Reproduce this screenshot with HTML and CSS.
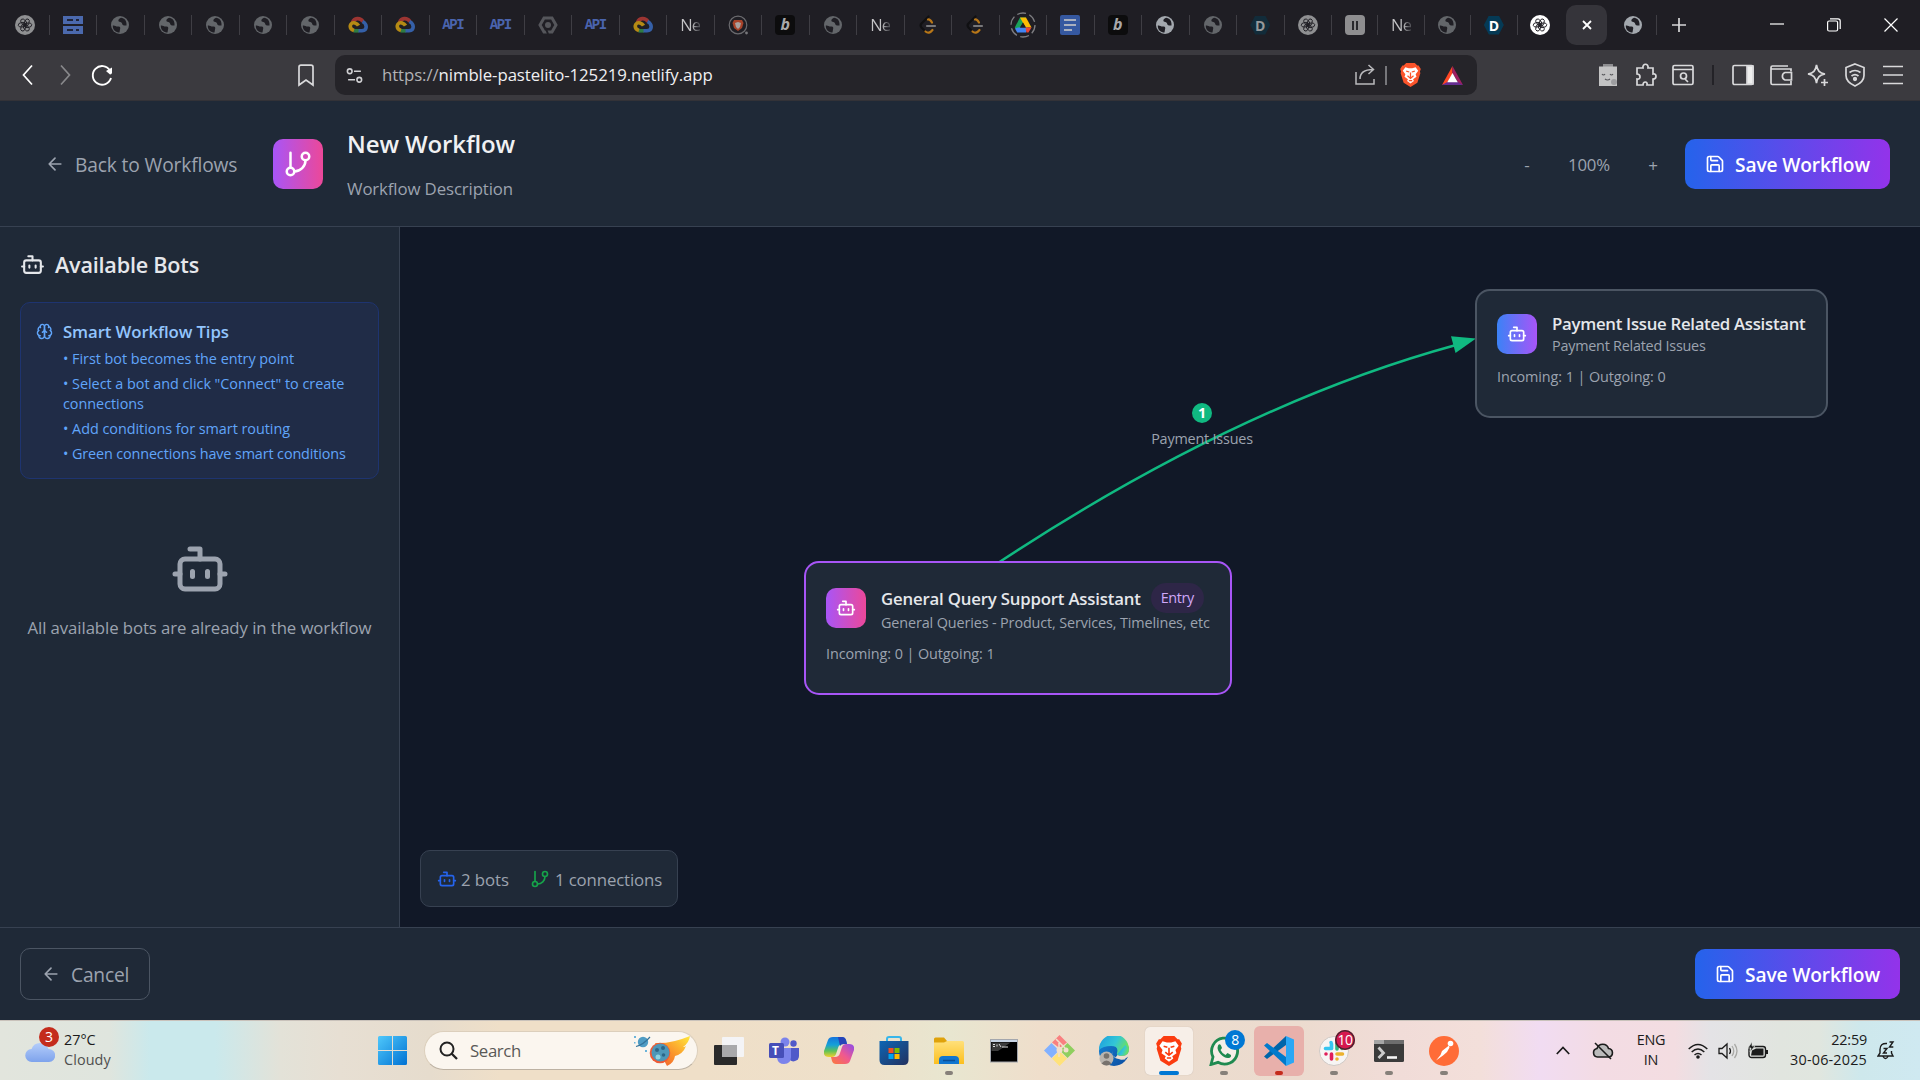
FILE: index.html
```html
<!DOCTYPE html>
<html lang="en">
<head>
<meta charset="utf-8">
<title>New Workflow</title>
<link rel="stylesheet" href="styles.css">
</head>
<body>
<svg width="0" height="0" class="defs" aria-hidden="true">
  <defs>
    <linearGradient id="gWin" x1="0" y1="0" x2="1" y2="1"><stop offset="0" stop-color="#4fc8fb"/><stop offset="1" stop-color="#0172d3"/></linearGradient>
    <linearGradient id="gCloud" x1="0" y1="0" x2="0" y2="1"><stop offset="0" stop-color="#b4cdfa"/><stop offset="1" stop-color="#7ea3ec"/></linearGradient>
    <linearGradient id="gFlame" x1="0" y1="1" x2="1" y2="0"><stop offset="0" stop-color="#f0562e"/><stop offset=".5" stop-color="#fb9a2c"/><stop offset="1" stop-color="#ffe93a"/></linearGradient>
    <linearGradient id="gCopA" x1="0" y1="0" x2="0" y2="1"><stop offset="0" stop-color="#1574dd"/><stop offset=".4" stop-color="#16a0d8"/><stop offset=".7" stop-color="#5fc257"/><stop offset="1" stop-color="#f3cf2d"/></linearGradient>
    <linearGradient id="gCopB" x1="1" y1="0" x2="0" y2="1"><stop offset="0" stop-color="#8d4bea"/><stop offset=".5" stop-color="#f0598f"/><stop offset="1" stop-color="#fb7b3a"/></linearGradient>
    <linearGradient id="gStore" x1="0" y1="0" x2="1" y2="1"><stop offset="0" stop-color="#0d66b5"/><stop offset="1" stop-color="#23315f"/></linearGradient>
    <linearGradient id="gFold" x1="0" y1="0" x2="0" y2="1"><stop offset="0" stop-color="#ffe07a"/><stop offset="1" stop-color="#fcbf1e"/></linearGradient>
    <linearGradient id="gEdge" x1="0" y1="0" x2="1" y2=".4"><stop offset="0" stop-color="#1b9be0"/><stop offset=".6" stop-color="#33c6d6"/><stop offset="1" stop-color="#6be061"/></linearGradient>
    <linearGradient id="gEdge2" x1="0" y1="0" x2="1" y2="1"><stop offset="0" stop-color="#1687d8"/><stop offset="1" stop-color="#0b4a9e"/></linearGradient>
  </defs>
  <symbol id="bot" viewBox="0 0 24 24"><g class="line"><path d="M12 8V4H8"/><rect width="16" height="12" x="4" y="8" rx="2"/><path d="M2 14h2M20 14h2M15 13v2M9 13v2"/></g></symbol>
  <symbol id="branch" viewBox="0 0 24 24"><g class="line"><path d="M6 3v12"/><circle cx="18" cy="6" r="3"/><circle cx="6" cy="18" r="3"/><path d="M18 9a9 9 0 0 1-9 9"/></g></symbol>
  <symbol id="arrow" viewBox="0 0 24 24"><g class="line"><path d="m12 19-7-7 7-7M19 12H5"/></g></symbol>
  <symbol id="save" viewBox="0 0 24 24"><g class="line"><path d="M15.2 3a2 2 0 0 1 1.4.6l3.8 3.8a2 2 0 0 1 .6 1.4V19a2 2 0 0 1-2 2H5a2 2 0 0 1-2-2V5a2 2 0 0 1 2-2z"/><path d="M17 21v-7a1 1 0 0 0-1-1H8a1 1 0 0 0-1 1v7M7 3v4a1 1 0 0 0 1 1h7"/></g></symbol>
  <symbol id="brain" viewBox="0 0 24 24"><g class="line"><path d="M12 5a3 3 0 1 0-5.997.125 4 4 0 0 0-2.526 5.770 4 4 0 0 0 .556 6.588A4 4 0 1 0 12 18Z"/><path d="M12 5a3 3 0 1 1 5.997.125 4 4 0 0 1 2.526 5.770 4 4 0 0 1-.556 6.588A4 4 0 1 1 12 18Z"/><path d="M15 13a4.500 4.500 0 0 1-3-4 4.500 4.500 0 0 1-3 4M6.003 5.125A3 3 0 0 0 6.400 6.500M3.477 10.896a4 4 0 0 1 .585-.396M6 18a4 4 0 0 1-1.967-.516M17.599 6.500a3 3 0 0 0 .399-1.375M19.938 10.500a4 4 0 0 1 .585.396M19.967 17.484A4 4 0 0 1 18 18"/></g></symbol>

  <symbol id="globe" viewBox="0 0 20 20"><circle cx="10" cy="10" r="9" fill="currentColor"/><path d="M2.800 10.500C5 10 6 12 8.500 11.500c2 0 2 1.500 1.500 3l-.5 3C6 17.500 2.500 15 2.800 10.500zM11 2.800c-2 1-3 2-2.500 3.500 1 1 3 .5 3.500 2 0 2 2 2.500 4.500 2.200C17 6 14.500 3 11 2.800z" fill="#1f1e24"/></symbol>
  <symbol id="openai" viewBox="0 0 20 20"><circle cx="10" cy="10" r="10" fill="currentColor"/><g fill="none" stroke="#1f1e24" stroke-width=".9"><ellipse cx="10.800" cy="7.300" rx="2.300" ry="4" transform="rotate(20 10 10)"/><ellipse cx="10.800" cy="7.300" rx="2.300" ry="4" transform="rotate(80 10 10)"/><ellipse cx="10.800" cy="7.300" rx="2.300" ry="4" transform="rotate(140 10 10)"/><ellipse cx="10.800" cy="7.300" rx="2.300" ry="4" transform="rotate(200 10 10)"/><ellipse cx="10.800" cy="7.300" rx="2.300" ry="4" transform="rotate(260 10 10)"/><ellipse cx="10.800" cy="7.300" rx="2.300" ry="4" transform="rotate(320 10 10)"/></g></symbol>
  <symbol id="gcloud" viewBox="0 0 20 20"><g fill="none" stroke-width="3.600"><path d="M4.500 7.500C6 2.800 12 2.200 15 6.500" stroke="#9c3532"/><path d="M14.500 6.500C19.500 9 19.500 15.500 14 15.800H10" stroke="#3560a8"/><path d="M10.500 15.800H5.500" stroke="#2e7b43"/><path d="M6 15.500C0 13.500 2 6.500 7 8c2 .6 3 1.600 3.500 2.600" stroke="#b58a14"/></g></symbol>
  <symbol id="server" viewBox="0 0 20 20"><g fill="#4b69ad"><path d="M0 1h20v8H0zM0 11h20v8H0z"/></g><path d="M4 4h6v2H4zM13 4h3v2h-3zM4 14h6v2H4zM13 14h3v2h-3z" fill="#1f2438"/></symbol>
  <symbol id="hex" viewBox="0 0 20 20"><path d="M6 3h8l4 7-4 7H6l-4-7z" fill="none" stroke="#55565b" stroke-width="3"/><circle cx="10" cy="10" r="3" fill="#55565b"/><path d="M8 14l2 5" stroke="#1f1e24" stroke-width="2"/></symbol>
  <symbol id="leet" viewBox="0 0 20 20"><g fill="none" stroke-width="2.200" stroke-linecap="round"><path d="M10.500 1.500 3.500 8.500q-1.800 2 0 4l4 4" stroke="#101012"/><path d="M10 4.500q2-.5 4 3M7.500 16.500q3.500 3 7-1.500" stroke="#b87718"/><path d="M9 11h8" stroke="#77777a"/></g></symbol>
  <symbol id="brave" viewBox="0 0 24 28"><path d="M7 0h10l3 3h1.500L24 7l-1 3 .5 2L20 23l-8 5-8-5L.5 12 1 10 0 7l2.500-4H4z" fill="currentColor"/><path d="M6 5l4 1h4l4-1 3 4-3 4 1 3-4 3 1 2-4 3-4-3 1-2-4-3 1-3-3-4z" fill="#fff"/><path d="M7 9.500l3.500 1M17 9.500l-3.500 1M12 11v6M8.500 15l3.500 3 3.500-3M10 20.500h4" stroke="currentColor" stroke-width="1.500" fill="none"/></symbol>
</svg>

<div class="screen">
  <header class="tabs">
    <div class="tab"><svg class="t-ic dim"><use href="#openai"/></svg></div>
    <div class="tab"><svg class="t-ic"><use href="#server"/></svg></div>
    <div class="tab"><svg class="t-ic gl"><use href="#globe"/></svg></div>
    <div class="tab"><svg class="t-ic gl"><use href="#globe"/></svg></div>
    <div class="tab"><svg class="t-ic gl"><use href="#globe"/></svg></div>
    <div class="tab"><svg class="t-ic gl"><use href="#globe"/></svg></div>
    <div class="tab"><svg class="t-ic gl"><use href="#globe"/></svg></div>
    <div class="tab"><svg class="t-ic"><use href="#gcloud"/></svg></div>
    <div class="tab"><svg class="t-ic"><use href="#gcloud"/></svg></div>
    <div class="tab"><span class="api">API</span></div>
    <div class="tab"><span class="api">API</span></div>
    <div class="tab"><svg class="t-ic"><use href="#hex"/></svg></div>
    <div class="tab"><span class="api">API</span></div>
    <div class="tab"><svg class="t-ic"><use href="#gcloud"/></svg></div>
    <div class="tab"><span class="ne">Ne</span></div>
    <div class="tab"><svg class="t-ic" viewBox="0 0 20 20"><circle cx="10" cy="10" r="8.800" fill="none" stroke="#6b6b6f" stroke-width="1.200"/><path d="M6 5h8l1.500 3-1.500 5-4 3-4-3-1.500-5z" fill="#a8432a"/><path d="M7 8l3-1 3 1-1 4-2 2-2-2z" fill="#a9a1a0"/><circle cx="18.500" cy="18" r="1.400" fill="#77777a"/></svg></div>
    <div class="tab"><span class="b-box">b</span></div>
    <div class="tab"><svg class="t-ic gl"><use href="#globe"/></svg></div>
    <div class="tab"><span class="ne">Ne</span></div>
    <div class="tab"><svg class="t-ic"><use href="#leet"/></svg></div>
    <div class="tab"><svg class="t-ic"><use href="#leet"/></svg></div>
    <div class="tab"><svg class="t-drive" viewBox="0 0 26 26"><circle cx="13" cy="13" r="12" fill="none" stroke="#7d7d80" stroke-width="1.300" stroke-dasharray="9 3.560"/><path d="M10 5.500h6L10.500 15 7.500 20 4.800 15.500z" fill="#19a25a"/><path d="M10 5.500h6l5.500 10h-6z" fill="#fbbc04"/><path d="M7.800 15.500h10L16 20.500H7.200L5 16.500z" fill="#4285f4"/><path d="M15.500 15.500h6l-3 5h-2z" fill="#ea4335"/><path d="M13 10.500l3 5h-6z" fill="#1f1e24"/></svg></div>
    <div class="tab"><svg class="t-ic" viewBox="0 0 20 20"><rect width="20" height="20" rx="2" fill="#3558a0"/><path d="M4 5h12M4 10h12M4 15h8" stroke="#a9b0bf" stroke-width="2"/></svg></div>
    <div class="tab"><span class="b-box">b</span></div>
    <div class="tab"><svg class="t-ic lit"><use href="#globe"/></svg></div>
    <div class="tab"><svg class="t-ic gl"><use href="#globe"/></svg></div>
    <div class="tab"><span class="d-hex off">D</span></div>
    <div class="tab"><svg class="t-ic dim"><use href="#openai"/></svg></div>
    <div class="tab sm"><span class="pause"><i></i><i></i></span></div>
    <div class="tab sm"><span class="ne">Ne</span></div>
    <div class="tab sm"><svg class="t-ic gl"><use href="#globe"/></svg></div>
    <div class="tab sm"><span class="d-hex">D</span></div>
    <div class="tab sm nodiv"><svg class="t-ic wht"><use href="#openai"/></svg></div>
    <div class="tab sm nodiv"><span class="active"><svg width="10" height="10" viewBox="0 0 10 10"><path d="M1 1l8 8M9 1 1 9" stroke="#fff" stroke-width="1.800"/></svg></span></div>
    <div class="tab sm"><svg class="t-ic lit"><use href="#globe"/></svg></div>
    <div class="tab sm nodiv"><svg width="14" height="14" viewBox="0 0 14 14"><path d="M7 0v14M0 7h14" stroke="#d6d6d8" stroke-width="1.700"/></svg></div>
    <div class="win-ctl">
      <svg width="14" height="14" viewBox="0 0 14 14"><path d="M0 6h14" stroke="#fff" stroke-width="1.200"/></svg>
      <svg width="14" height="14" viewBox="0 0 14 14"><g fill="none" stroke="#fff" stroke-width="1.200"><rect x=".6" y="3" width="10" height="10" rx="1.500"/><path d="M3 .8h8q2.200 0 2.200 2.200v8"/></g></svg>
      <svg width="14" height="14" viewBox="0 0 14 14"><path d="M.5.5l13 13M13.500.5l-13 13" stroke="#fff" stroke-width="1.200"/></svg>
    </div>
  </header>

  <div class="toolbar">
    <svg class="tb back" viewBox="0 0 24 24"><path d="M16 2.500 7.500 12l8.500 9.500" stroke="#fff"/></svg>
    <svg class="tb fwd" viewBox="0 0 24 24"><path d="M8 2.500 16.500 12 8 21.500" stroke="#88888b"/></svg>
    <svg class="tb reload" viewBox="0 0 24 24"><path d="M21 15a9.300 9.300 0 1 1-1-7.500" stroke="#fff" stroke-width="1.900"/><path d="M16 8l6-3.500v5q0 2-2 2z" fill="#fff" stroke="none"/></svg>
    <svg class="tb mark" viewBox="0 0 24 24"><path d="M5 4q0-1.800 2-1.800h10q2 0 2 1.800v18l-7-5-7 5z"/></svg>
    <div class="url">
      <svg class="tune" viewBox="0 0 16 16"><g fill="none" stroke="#d0d0d3" stroke-width="1.500"><circle cx="3.500" cy="4" r="2.200"/><path d="M7.500 4H14M2 12h6.500"/><circle cx="12.500" cy="12" r="2.200"/></g></svg>
      <span class="address">https://<b>nimble-pastelito-125219.netlify.app</b></span>
      <svg class="tb share" viewBox="0 0 24 24"><path d="M3 9v12h18v-5M7 16c0-6 4-9.500 13-9.500M15.500 2l5 4.500-5 4.500" stroke="#b9b9bc" stroke-width="1.500"/></svg>
      <i class="u-div"></i>
      <svg class="u-brave"><use href="#brave"/></svg>
      <svg class="u-bat" viewBox="0 0 24 22"><path d="M12 1 1 21l5-2 6-9z" fill="#ff4724"/><path d="M1 21h22l-5-4H8z" fill="#662d91"/><path d="M12 1l11 20-5-3-6-9z" fill="#9e1f63"/><path d="M12 8.500 17.500 18h-11z" fill="#fff"/></svg>
    </div>
    <svg class="tb ext" viewBox="0 0 24 24"><path d="M7 1h10v3H7z" fill="#8d8d90" stroke="none"/><path d="M3 3.500h18V23H3z" fill="#c3c3c4" stroke="none"/><path d="M6 11q1.500 2 3 0M14 11q1.500 2 3 0M9 16q2.500 2 5 0" stroke="#55555a" stroke-width="1.200"/><circle cx="18" cy="19" r="3" fill="#9d9da0" stroke="none"/></svg>
    <svg class="tb puzzle" viewBox="0 0 24 24"><path d="M3 5h6c-1-5 6-5 5 0h5v6c4-1 4 5 0 5v6h-6c1-4-4-4-4 0H3v-6c4 1 4-5 0-5z"/></svg>
    <svg class="tb find" viewBox="0 0 24 24"><rect x="2" y="2.500" width="20" height="19" rx="1.500"/><path d="M2 6.500h20M14 16l3 3"/><circle cx="12.500" cy="13" r="3"/></svg>
    <i class="t-div"></i>
    <svg class="tb side" viewBox="0 0 24 24"><rect x="2" y="2.500" width="20" height="19" rx="1.500"/><path d="M16 3h6v18h-6z" fill="#eee"/></svg>
    <svg class="tb wallet" viewBox="0 0 24 24"><path d="M22 8.500V6H3q-1 0-1-1.500T3.500 3H19M2 4.500V20q0 1.500 1.500 1.500H22v-3.500"/><path d="M22.500 9.500H16a4 4 0 0 0 0 7.500h6.500z"/></svg>
    <svg class="tb spark" viewBox="0 0 24 24"><path d="M10.500 2c1 6 3 8 8.500 9-5.500 1-7.500 3-8.500 9-1-6-3-8-8.500-9 5.500-1 7.500-3 8.500-9zM18.500 16v7M15 19.500h7"/></svg>
    <svg class="tb vpn" viewBox="0 0 24 24"><path d="M12 1l9 3.500v8q0 6.500-9 10.500-9-4-9-10.500v-8z"/><path d="M6.500 9.500q5.500-4 11 0M8.500 13q3.500-2.800 7 0"/><circle cx="12" cy="16" r="1.300" fill="#ddd"/></svg>
    <svg class="tb menu" viewBox="0 0 24 24"><path d="M2 3.500h20M2 12h20M2 20.500h20"/></svg>
  </div>

  <div class="app">
    <div class="app-head">
      <div class="head-left">
        <div class="back-btn"><svg class="i20"><use href="#arrow"/></svg><span class="drop">Back to Workflows</span></div>
        <div class="logo"><svg class="i30"><use href="#branch"/></svg></div>
        <div class="titles"><div class="title">New Workflow</div><div class="desc">Workflow Description</div></div>
      </div>
      <div class="head-right">
        <span class="zoom-btn">-</span><span class="zoom-val">100%</span><span class="zoom-btn plus">+</span>
        <div class="save-btn"><svg class="i20"><use href="#save"/></svg><span class="drop">Save Workflow</span></div>
      </div>
    </div>

    <div class="app-main">
      <aside class="sidebar">
        <div class="side-title"><svg class="i25"><use href="#bot"/></svg><span>Available Bots</span></div>
        <div class="tips">
          <svg class="i17"><use href="#brain"/></svg>
          <div class="tips-body">
            <div class="tips-title">Smart Workflow Tips</div>
            <ul>
              <li class="loose">• First bot becomes the entry point</li>
              <li class="loose">• Select a bot and click "Connect" to create<br>connections</li>
              <li class="loose">• Add conditions for smart routing</li>
              <li>• Green connections have smart conditions</li>
            </ul>
          </div>
        </div>
        <div class="empty"><svg class="i60"><use href="#bot"/></svg><p>All available bots are already in the workflow</p></div>
      </aside>

      <div class="canvas">
        <svg class="wire" width="1520" height="700" viewBox="400 227 1520 700">
          <path d="M991 567.500 1001 561Q1240 404 1456 345" fill="none" stroke="#10b981" stroke-width="2.500"/>
          <path d="M1476 338.500 1451 336.200 1455.500 353z" fill="#10b981"/>
        </svg>
        <div class="edge-tag"><span class="edge-num">1</span><span class="edge-txt">Payment Issues</span></div>
        <div class="node node-pay">
          <div class="node-top"><div class="node-ic blue"><svg class="i20"><use href="#bot"/></svg></div>
            <div><div class="node-name n1">Payment Issue Related Assistant</div><div class="node-sub s1">Payment Related Issues</div></div></div>
          <div class="node-io">Incoming: 1 | Outgoing: 0</div>
        </div>
        <div class="node node-gen">
          <div class="node-top"><div class="node-ic pink"><svg class="i20"><use href="#bot"/></svg></div>
            <div><div class="node-row"><span class="node-name n2">General Query Support Assistant</span><span class="entry">Entry</span></div><div class="node-sub s2">General Queries - Product, Services, Timelines, etc</div></div></div>
          <div class="node-io">Incoming: 0 | Outgoing: 1</div>
        </div>
        <div class="stats"><svg class="i20 c-blue"><use href="#bot"/></svg><span class="st1">2 bots</span><svg class="i20 c-green"><use href="#branch"/></svg><span class="st2">1 connections</span></div>
      </div>
    </div>

    <div class="app-foot">
      <div class="cancel"><svg class="i20"><use href="#arrow"/></svg><span>Cancel</span></div>
      <div class="save-btn"><svg class="i20"><use href="#save"/></svg><span>Save Workflow</span></div>
    </div>
  </div>

  <footer class="taskbar">
    <div class="weather">
      <div class="w-icon"><svg width="30" height="24" viewBox="0 0 30 24"><path d="M7 23a6.500 6.500 0 0 1-.5-13A9 9 0 0 1 23.500 10 6.500 6.500 0 0 1 24 23z" fill="url(#gCloud)"/></svg><span class="w-badge">3</span></div>
      <div class="w-text"><span>27°C</span><span class="sub">Cloudy</span></div>
    </div>
    <div class="dock">
      <svg class="start" width="29" height="29" viewBox="0 0 29 29"><path d="M0 1.500Q0 0 1.500 0H14v14H0zM15 0h12.500Q29 0 29 1.500V14H15zM0 15h14v14H1.500Q0 29 0 27.500zM15 15h14v12.500q0 1.500-1.500 1.500H15z" fill="url(#gWin)"/></svg>
      <div class="search">
        <svg width="19" height="19" viewBox="0 0 19 19"><circle cx="8" cy="8" r="6.500" fill="none" stroke="#222" stroke-width="2"/><path d="M12.500 12.500 18 18" stroke="#222" stroke-width="2.300"/></svg>
        <span>Search</span>
        <svg class="comet" width="58" height="36" viewBox="0 0 58 36"><circle cx="10" cy="9" r="5.200" fill="#4f9cc4"/><path d="M3 13.500Q10 12 17 4" stroke="#35749b" stroke-width="1.200" fill="none"/><path d="M1 3h2v2H1zM1 9h1.500v1.500H1zM12 17h2v2h-2z" fill="#6cb4da"/><path d="M22 10Q38 11 57 3q-1 7-7 11 2 0 3-1-3 8-11 10-1 7-8 10z" fill="url(#gFlame)"/><circle cx="27" cy="20" r="10.300" fill="#ee5a36"/><circle cx="27.500" cy="19.500" r="9" fill="#4e97b8"/><circle cx="24" cy="17" r="2" fill="#2d6688"/><circle cx="30" cy="15" r="2" fill="#2d6688"/><circle cx="25" cy="24" r="2.500" fill="#8fd3e2"/><circle cx="30.500" cy="22" r="1.800" fill="#2d6688"/></svg>
      </div>
      <div class="cell"><svg width="30" height="30" viewBox="0 0 30 30"><rect x="0" y="9" width="23" height="20" rx="1" fill="#2a2a2a"/><rect x="8" y="1" width="22" height="20" rx="1" fill="#f4f4f6"/><path d="M8 9h15v12H8z" fill="#a9a9ab"/></svg></div>
      <div class="cell"><svg width="30" height="30" viewBox="0 0 30 30"><circle cx="16" cy="6" r="4.500" fill="#7b83eb"/><circle cx="24.500" cy="7.500" r="3.200" fill="#5059c9"/><path d="M20 12h10v8a5.500 5.500 0 0 1-10 3z" fill="#5059c9"/><path d="M8 12h14v9q0 7-7 7-6 0-7-6z" fill="#7b83eb"/><rect x="0" y="7" width="15" height="15" rx="1.500" fill="#464eb8"/></svg><span class="teams-t">T</span></div>
      <div class="cell"><svg width="30" height="30" viewBox="0 0 30 30"><path d="M9 1h9q3 0 4 3l1 4h-4q-4 0-5 4l-2 6q-1 3-4 3H5q-6 0-5-6L4 4q1-3 5-3z" fill="url(#gCopA)"/><path d="M14 1h4q3 0 4 3l1 4h-3q-3 0-4 2z" fill="#2744b8"/><path d="M21 28h-9q-3 0-4-3l-1-4h4q4 0 5-4l2-6q1-3 4-3h3q6 0 5 6l-4 11q-1 3-5 3z" fill="url(#gCopB)"/></svg></div>
      <div class="cell"><svg width="30" height="30" viewBox="0 0 30 30"><path d="M8 7V3q0-2 2-2h10q2 0 2 2v4" fill="none" stroke="#38b6ea" stroke-width="2"/><path d="M.5 5h29v19q0 5-5 5h-19q-5 0-5-5z" fill="url(#gStore)"/><path d="M9.500 12h5v5h-5z" fill="#f25022"/><path d="M15.500 12h5v5h-5z" fill="#7fba00"/><path d="M9.500 18h5v5h-5z" fill="#00a4ef"/><path d="M15.500 18h5v5h-5z" fill="#ffb900"/></svg></div>
      <div class="cell run"><svg width="30" height="30" viewBox="0 0 30 30"><path d="M0 3q0-1.500 1.500-1.500H10l3 3.500v3H0z" fill="#dfa20b"/><path d="M0 6.500h10l3-1.500h15.500q1.500 0 1.500 1.500V28H0z" fill="url(#gFold)"/><path d="M5 28v-4q0-4 4-4h12q4 0 4 4v4z" fill="#1176cf"/><path d="M9 24.500h12" stroke="#0b4f97" stroke-width="1.500"/></svg></div>
      <div class="cell"><svg width="28" height="24" viewBox="0 0 28 24"><rect x=".5" y=".5" width="27" height="22.500" fill="#000" stroke="#a4a7ad"/><path d="M1 1h26v2H1z" fill="#c7d3e3"/><path d="M1.500 3.500h19L8 12H1.500z" fill="#3a3a3a"/><path d="M3 5.500h2M3 7.500h2M7 5.500v2M9 5l2 3M12 8h6" stroke="#ddd"/></svg></div>
      <div class="cell"><svg width="31" height="31" viewBox="0 0 31 31"><path d="M15.500 0 23 7.500 15.500 13 8 7.500z" fill="#f98080"/><path d="M7.500 8 15 15.500 7.500 23 0 15.500z" fill="#82b1ff"/><path d="M23.500 8 31 15.500 23.500 23 16 15.500z" fill="#8fcf5f"/><path d="M15.500 16.500 23 23.500 15.500 31 8 23.500z" fill="#ffe27a"/><path d="M12 4l9 9M15 8v14" stroke="#f1dfcc" stroke-width="1.500"/><circle cx="15.500" cy="15" r="3" fill="#f1dfcc"/><circle cx="22" cy="15" r="2.500" fill="#f1dfcc"/></svg></div>
      <div class="cell"><svg width="30" height="30" viewBox="0 0 30 30"><circle cx="15" cy="15" r="15" fill="url(#gEdge2)"/><path d="M0 14A15 15 0 0 1 30 13q0 7-7 7-6 0-5-3 2-7-6-7-8 0-12 4z" fill="url(#gEdge)"/><path d="M13 15q0 9 14 8-3 1-7 0-7-1-7-8z" fill="#f0e0d0"/><path d="M30 13q0 7-7 7-3 0-4.500-1l-2 2.500Q24 26 30 20z" fill="#efdecd"/><path d="M29.900 13q-.5 6.500-7 6.500-3 0-4.500-1.500l8-9z" fill="url(#gEdge)"/><circle cx="7.500" cy="22.500" r="7" fill="#b9b4ae"/><circle cx="7.500" cy="20" r="2.800" fill="#77726d"/><path d="M2.500 27.500q5-6 10 0-5 4-10 0z" fill="#77726d"/></svg></div>
      <div class="cell run active-app"><svg class="brave-ic"><use href="#brave"/></svg></div>
      <div class="cell run"><svg width="30" height="30" viewBox="0 0 30 30"><path d="M2 28.500 4 21A13 13 0 1 1 9 26.300z" fill="#f6eee7" stroke="#1f8a50" stroke-width="2.800"/><path d="M9 9.500q1.500-2.500 3 0l1 2.500-1.500 2q2 4 5 5l2-2 3.500 2q.5 2.500-2.500 3-4 .5-8-4T9 9.500z" fill="#1f8a50"/></svg><span class="n-badge wa">8</span></div>
      <div class="cell run attention"><svg width="30" height="30" viewBox="0 0 30 30"><path d="M22 0v9L3 23 0 20.500z" fill="#0065a9"/><path d="M22 30v-9L3 7 0 9.500z" fill="#007acc"/><path d="M22 0l8 3.500v23L22 30z" fill="#2ba7f5"/></svg></div>
      <div class="cell run"><svg width="30" height="30" viewBox="0 0 30 30"><circle cx="15" cy="15" r="14.500" fill="#f7f5f4" stroke="#cfc9c5"/><g stroke-width="3.600" stroke-linecap="round"><path d="M12 6.500v0M6.500 12.500h6" stroke="#36c5f0"/><path d="M12.500 8v4" stroke="#36c5f0"/><path d="M18 7v6M23 12.500v0" stroke="#2eb67d"/><path d="M18 18h5.500M18 23v0" stroke="#ecb22e"/><path d="M12.500 18v5M7 18v0" stroke="#e01e5a"/></g></svg><span class="n-badge sl">10</span></div>
      <div class="cell run"><svg width="30" height="22" viewBox="0 0 30 22"><rect width="30" height="22" rx="1.500" fill="#3b3b3b"/><path d="M0 0h30v4H0z" fill="#6d6d6d"/><path d="M0 0h10v4H0z" fill="#a5a5a5"/><path d="M4.500 7.500 9.500 13l-5 5" fill="none" stroke="#ccc" stroke-width="2.800"/><path d="M13 17.500h10" stroke="#f5f5f5" stroke-width="2.600"/></svg></div>
      <div class="cell run"><svg width="30" height="30" viewBox="0 0 30 30"><circle cx="15" cy="15" r="15" fill="#ff6c37"/><circle cx="21.500" cy="7.500" r="2.800" fill="#fff"/><path d="M20 9.500 13 15l-1.500 4L7 24.500l7-5 4-3.500 2.500-4.500z" fill="#fff"/></svg></div>
    </div>
    <div class="tray">
      <svg width="14" height="9" viewBox="0 0 14 9"><path d="M.8 8 7 1.500 13.200 8" fill="none" stroke="#1b1b1b" stroke-width="1.700"/></svg>
      <svg class="od" width="22" height="18" viewBox="0 0 22 18"><path d="M5.500 15a4.300 4.300 0 0 1-.5-8.500 6 6 0 0 1 11.500 0A4.300 4.300 0 0 1 17 15z" fill="#bbb" stroke="#1b1b1b" stroke-width="1.600"/><path d="M3 1l16 16" stroke="#1b1b1b" stroke-width="1.600"/></svg>
      <div class="lang"><span>ENG</span><span>IN</span></div>
      <svg class="wifi" width="20" height="16" viewBox="0 0 20 16"><g fill="none" stroke="#1b1b1b" stroke-width="1.500"><path d="M.7 6q9.300-9 18.600 0M3.700 9q6.300-6 12.600 0M6.500 12q3.500-3 7 0"/></g><circle cx="10" cy="14" r="1.800" fill="#1b1b1b"/></svg>
      <svg class="snd" width="20" height="18" viewBox="0 0 20 18"><g fill="none" stroke="#1b1b1b" stroke-width="1.300"><path d="M1 6.500h3L9 2v14l-5-4.500H1zM11.500 6q2 3 0 6"/><path d="M14 4q3.500 5 0 10M16.500 2q5 7 0 14" stroke="#a9a9a6"/></g></svg>
      <svg class="batt" width="21" height="17" viewBox="0 0 21 17"><rect x="1" y="4.500" width="16.500" height="11" rx="2.500" fill="none" stroke="#1b1b1b" stroke-width="1.400"/><path d="M4 8.500l4-2h7.500v7H3z" fill="#1b1b1b"/><path d="M19 8v4" stroke="#1b1b1b" stroke-width="2"/><path d="M4 0 0 6h3l-1 4 5-6H4z" fill="#1b1b1b" stroke="#dfe4df" stroke-width=".6"/></svg>
      <div class="clock"><span>22:59</span><span class="date">30-06-2025</span></div>
      <svg class="bell" width="18" height="19" viewBox="0 0 18 19"><g fill="none" stroke="#1b1b1b" stroke-width="1.400"><path d="M10 2.500Q3 2 3 8.500v3.500l-2 3h15l-1.500-3V10M6 15.500q2.500 4 5 0M6.500 7.500h3.500l-3.500 4.500h3.500M12.500 1h3.500l-3.500 5h3.800"/></g></svg>
    </div>
  </footer>
</div>
</body>
</html>
```
FILE: styles.css
```css
* { box-sizing: border-box; }
body { margin: 0; font-family: "Open Sans", "Noto Sans", sans-serif; background: #111827; overflow: hidden; }
.defs { position: absolute; }
svg { display: block; flex: none; }
.line { fill: none; stroke: currentColor; stroke-width: 2; stroke-linecap: round; stroke-linejoin: round; }
.screen { width: 1920px; height: 1080px; display: flex; flex-direction: column; white-space: nowrap; }

/* tab strip */
.tabs { height: 50px; flex: none; background: #1f1e24; display: flex; align-items: center; padding-left: 2px; }
.tab { width: 47.5px; height: 20px; flex: none; display: flex; align-items: center; justify-content: center; border-right: 1px solid #3f3e44; }
.tab.sm { width: 46.4px; }
.tab.nodiv { border-color: transparent; }
.t-ic { width: 20px; height: 20px; }
.t-drive { width: 26px; height: 26px; }
.dim { color: #8f9092; }
.gl { color: #63666a; }
.lit { color: #a3a8ae; }
.wht { color: #fff; }
.api { font: 700 14px/20px "Liberation Mono", monospace; letter-spacing: -1.4px; color: #4a64ad; }
.ne { font-size: 16.5px; line-height: 20px; letter-spacing: -.8px; padding-left: 0; color: transparent; background: linear-gradient(90deg, #c4c4c6 0 60%, #55555a 90%); background-clip: text; -webkit-background-clip: text; }
.b-box { width: 20px; height: 20px; border-radius: 4px; background: #0c0c0d; color: #a8a8aa; font: italic 700 16px/19px "Open Sans", sans-serif; text-align: center; }
.d-hex { width: 20px; height: 19px; background: #053a55; color: #fff; font-weight: 700; font-size: 14px; line-height: 19px; text-align: center; clip-path: polygon(25% 0, 75% 0, 100% 50%, 75% 100%, 25% 100%, 0 50%); }
.d-hex.off { background: #122c3a; color: #96999b; }
.pause { width: 20px; height: 20px; border-radius: 4px; background: #8e8e90; display: flex; gap: 2px; align-items: center; justify-content: center; }
.pause i { width: 2px; height: 9px; background: #2a2a2e; }
.active { width: 41px; height: 40px; flex: none; border-radius: 10px; background: #35343a; display: flex; align-items: center; justify-content: center; }
.win-ctl { margin-left: auto; padding-right: 22px; display: flex; gap: 43px; }

/* navigation toolbar */
.toolbar { height: 51px; flex: none; background: #3b3a3f; border-bottom: 1px solid #333237; display: flex; align-items: center; padding-left: 16px; }
.tb { width: 24px; height: 24px; fill: none; stroke: #d9d9db; stroke-width: 1.7; }
.fwd { margin-left: 13px; }
.reload { margin-left: 13px; }
.mark { margin-left: 180px; }
.url { width: 1142px; height: 40px; margin-left: 17px; background: #252429; border-radius: 10px; display: flex; align-items: center; padding-left: 11px; }
.tune { width: 17px; height: 17px; }
.address { margin-left: 19px; font-size: 16.8px; letter-spacing: -.08px; padding-bottom: 1px; color: #b3b3b6; width: 971px; }
.address b { font-weight: 400; color: #f0f0f2; }
.u-div { width: 1.5px; height: 19px; background: #77777b; margin-left: 8px; }
.u-brave { width: 21px; height: 24px; margin-left: 13px; color: #fb542b; }
.u-bat { width: 23px; height: 21px; margin-left: 20px; }
.ext { margin-left: 119px; }
.puzzle { margin-left: 14px; }
.find { margin-left: 13px; }
.t-div { width: 2px; height: 20px; background: #232227; margin-left: 17px; }
.side { margin-left: 17px; }
.wallet { margin-left: 14px; }
.spark, .vpn { margin-left: 13px; }
.menu { margin-left: 14px; }

/* application */
.app { height: 919px; flex: none; display: flex; flex-direction: column; background: #1f2937; color: #9ca3af; }
.i17 { width: 17px; height: 17px; }
.i20 { width: 20px; height: 20px; }
.i25 { width: 25px; height: 25px; }
.i30 { width: 30px; height: 30px; }
.i60 { width: 60px; height: 60px; }
.drop { padding-top: 2px; }
.app-head { height: 126px; flex: none; border-bottom: 1px solid #374151; padding: 0 30px; display: flex; align-items: center; justify-content: space-between; }
.head-left, .head-right { display: flex; align-items: center; }
.back-btn { display: flex; align-items: center; gap: 10px; padding-left: 15px; width: 243px; font-size: 19.2px; letter-spacing: -.14px; }
.logo { width: 50px; height: 50px; border-radius: 10px; background: linear-gradient(90deg, #a855f7, #ec4899); color: #fff; display: flex; align-items: center; justify-content: center; }
.titles { padding: 5px 0 0 24px; }
.title { font-size: 24px; line-height: 45px; font-weight: 600; letter-spacing: -.12px; color: #f0f1f3; }
.desc { font-size: 16.8px; line-height: 45px; letter-spacing: -.11px; }
.zoom-btn { width: 48px; text-align: center; font-size: 17px; padding-top: 2px; }
.plus { padding-top: 4px; }
.zoom-val { width: 78px; padding: 2px 2px 0 0; text-align: center; font-size: 16.8px; letter-spacing: -.2px; }
.save-btn { width: 205px; height: 50px; border-radius: 10px; background: linear-gradient(90deg, #2563eb, #9333ea); color: #fff; font-size: 19.2px; font-weight: 600; letter-spacing: -.141px; display: flex; align-items: center; gap: 10px; padding-left: 20px; }
.head-right .save-btn { margin-left: 8px; }

.app-main { height: 700px; flex: none; display: flex; }
.sidebar { width: 400px; flex: none; border-right: 1px solid #374151; padding: 20px; }
.side-title { display: flex; align-items: center; gap: 10px; height: 35px; font-size: 21.6px; font-weight: 600; letter-spacing: -.21px; color: #e5e7eb; }
.tips { margin-top: 20px; height: 177px; border: 1px solid #1e3470; border-radius: 10px; background: #202c47; display: flex; gap: 10px; padding: 16px 15px 0; color: #60a5fa; }
.tips .i17 { margin-top: 4px; }
.tips-title { font-size: 16.8px; line-height: 25px; font-weight: 600; letter-spacing: -.115px; color: #93c5fd; }
.tips ul { list-style: none; margin: 5px 0 0; padding: 0; display: flex; flex-direction: column; gap: 5px; font-size: 14.4px; line-height: 20px; letter-spacing: -.125px; }
.loose { letter-spacing: -.03px; }
.empty { display: flex; flex-direction: column; align-items: center; padding-top: 60px; }
.empty p { margin: 16px 0 0; font-size: 16.8px; line-height: 25px; letter-spacing: -.09px; }

.canvas { flex: 1; position: relative; background: #111827; }
.wire { position: absolute; left: 0; top: 0; }
.edge-tag { position: absolute; left: 742px; top: 175.5px; width: 120px; display: flex; flex-direction: column; align-items: center; }
.edge-num { width: 20px; height: 20px; border-radius: 50%; background: #10b981; color: #fff; font-size: 14.4px; line-height: 20px; font-weight: 700; text-align: center; }
.edge-txt { margin-top: 6px; font-size: 14.4px; line-height: 20px; letter-spacing: -.2px; }
.node { position: absolute; border: 2px solid #4b5563; border-radius: 15px; background: #1f2937; padding: 0 20px; }
.node-pay { left: 1075px; top: 62px; width: 353px; height: 129px; padding-top: 20px; }
.node-gen { left: 404px; top: 334px; width: 428px; height: 134px; padding-top: 20px; border-color: #a855f7; }
.node-top { display: flex; align-items: center; gap: 15px; }
.node-pay .node-top { height: 46px; }
.node-gen .node-top { height: 50px; }
.node-ic { width: 40px; height: 40px; flex: none; border-radius: 10px; color: #fff; display: flex; align-items: center; justify-content: center; }
.blue { background: linear-gradient(90deg, #3b82f6, #a855f7); }
.pink { background: linear-gradient(90deg, #a855f7, #ec4899); }
.node-row { display: flex; align-items: flex-start; gap: 10px; }
.node-name { font-size: 16.8px; line-height: 25px; font-weight: 600; color: #e5e7eb; }
.node-pay .node-name { margin-top: -1px; line-height: 24px; }
.node-row .node-name { padding-top: 3px; }
.n1 { letter-spacing: -.29px; }
.n2 { letter-spacing: -.188px; }
.node-sub { font-size: 14.4px; line-height: 20px; }
.s1 { letter-spacing: -.237px; margin-bottom: -1px; }
.s2 { letter-spacing: -.126px; }
.entry { width: 53px; height: 30px; border-radius: 15px; background: #2e2647; color: #d0a8f8; font-size: 14.4px; line-height: 29px; letter-spacing: -.4px; text-align: center; }
.node-io { margin-top: 10px; font-size: 14.4px; line-height: 20px; letter-spacing: -.087px; }
.node-gen .node-io { margin-top: 11px; }
.stats { position: absolute; left: 20px; top: 623px; width: 258px; height: 57px; border: 1px solid #374151; border-radius: 10px; background: #1f2937; display: flex; align-items: center; padding-left: 16px; font-size: 16.8px; }
.stats span { padding-top: 1px; }
.c-blue { color: #2563eb; }
.c-green { color: #16a34a; }
.stats .st1 { width: 73px; padding-left: 4px; letter-spacing: -.05px; }
.stats .st2 { padding-left: 5px; letter-spacing: -.13px; }

.app-foot { height: 93px; flex: none; border-top: 1px solid #374151; padding: 0 20px; display: flex; align-items: center; justify-content: space-between; }
.cancel { width: 130px; height: 52px; border: 1px solid #4b5563; border-radius: 10px; display: flex; align-items: center; gap: 10px; padding-left: 20px; font-size: 19.2px; letter-spacing: -.2px; }

/* taskbar */
.taskbar { height: 60px; flex: none; display: flex; align-items: center; border-top: 1px solid #c9c2bb; color: #1b1b1b; font-size: 14.4px; line-height: 20px;
  background: linear-gradient(90deg, #e2e5dd 0, #dfe5de 110px, #cae9ec 150px, #cae9ec 215px, #e3e2d8 280px, #e7dfd3 340px, #e6dccd 430px, #efdfc8 500px, #efdfc8 700px, #eee0ca 860px, #e8e6d0 950px, #efdecb 1040px, #ebdccd 1150px, #ecdbcf 1300px, #f1dcd8 1400px, #f3dfda 1480px, #f1dcf2 1540px, #f3dce4 1600px, #f3dde1 1675px, #e4e3e6 1710px, #e1e5df 1780px, #e0e6df 1820px, #cee8ec 1860px, #cfe9f1 1920px); }
.weather { display: flex; align-items: center; width: 354px; padding-left: 25px; }
.w-icon { position: relative; width: 30px; height: 24px; }
.w-badge { position: absolute; left: 14px; top: -12px; width: 20px; height: 20px; border-radius: 50%; background: #c42b1c; color: #fff; text-align: center; font-size: 14px; }
.w-text { padding: 0 0 2px 9px; display: flex; flex-direction: column; }
.w-text .sub { color: #4f4f4f; letter-spacing: .1px; }
.dock { display: flex; align-items: center; gap: 7px; }
.start { margin: 0 10px 0 24px; }
.search { width: 274px; height: 39px; border-radius: 20px; background: #fbf6ef; border: 1px solid #dccfbc; border-bottom-color: #bdb2a3; display: flex; align-items: center; padding-left: 14px; font-size: 16.8px; letter-spacing: -.36px; color: #5a5957; }
.search span { padding-left: 12px; width: 175px; }
.cell { position: relative; width: 48px; height: 48px; display: flex; align-items: center; justify-content: center; border-radius: 5px; }
.run::after { content: ""; position: absolute; left: 20px; bottom: 0; width: 8px; height: 4px; border-radius: 2px; background: #86807a; }
.active-app { background: #f7efe8; box-shadow: 0 0 1px #b9aca2; }
.active-app::after { left: 14px; width: 20px; background: #0078d4; }
.attention { background: #e8b0ab; box-shadow: 0 0 0 1px #e8b0ab; }
.attention::after { background: #c42b1c; }
.brave-ic { width: 26px; height: 30px; color: #fb3c10; }
.teams-t { position: absolute; left: 12px; top: 14px; color: #fff; font-weight: 700; font-size: 12px; }
.n-badge { position: absolute; left: 25px; top: 3px; width: 20px; height: 20px; border-radius: 50%; color: #fff; text-align: center; font-size: 14px; line-height: 20px; letter-spacing: -.5px; }
.wa { background: #0078d4; }
.sl { background: #d5184e; box-shadow: inset 0 0 0 1.5px #4a2430; }
.tray { flex: 1; display: flex; align-items: center; justify-content: flex-end; padding-right: 25px; }
.od { margin-left: 22px; }
.lang { width: 40px; margin-left: 17px; padding-bottom: 1px; display: flex; flex-direction: column; align-items: center; letter-spacing: -.27px; }
.wifi { margin-left: 17px; }
.snd { margin-left: 10px; }
.batt { margin-left: 10px; }
.clock { width: 98px; padding-bottom: 1px; display: flex; flex-direction: column; align-items: flex-end; letter-spacing: -.2px; }
.clock .date { letter-spacing: .18px; }
.bell { margin-left: 10px; }
```
